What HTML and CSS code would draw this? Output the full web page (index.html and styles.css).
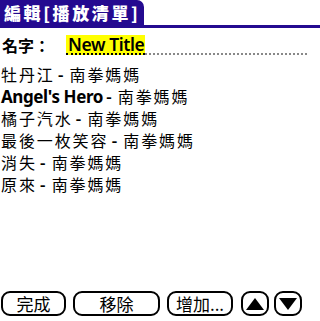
FILE: index.html
```html
<!DOCTYPE html>
<html lang="zh-Hant">
<head>
<meta charset="utf-8">
<link rel="stylesheet" href="styles.css">
</head>
<body>
<div class="screen">
  <div class="titlebar">
    <div class="tab">編輯[播放清單]</div>
  </div>
  <div class="name-row">
    <span class="label">名字：</span>
    <span class="field"><span class="value">New Title</span></span>
  </div>
  <ul class="list">
    <li>牡丹江<span class="sep">-</span>南拳媽媽</li>
    <li><span class="latin">Angel's Hero</span><span class="sep">-</span>南拳媽媽</li>
    <li>橘子汽水<span class="sep">-</span>南拳媽媽</li>
    <li>最後一枚笑容<span class="sep">-</span>南拳媽媽</li>
    <li>消失<span class="sep">-</span>南拳媽媽</li>
    <li>原來<span class="sep">-</span>南拳媽媽</li>
  </ul>
  <div class="buttons">
    <button class="btn w-done">完成</button>
    <button class="btn w-remove">移除</button>
    <button class="btn w-add">增加...</button>
    <button class="btn arrow"><svg width="20" height="14" viewBox="0 0 20 14"><polygon points="10,1 19,13 1,13" fill="#000"/></svg></button>
    <button class="btn arrow"><svg width="20" height="14" viewBox="0 0 20 14"><polygon points="1,1 19,1 10,13" fill="#000"/></svg></button>
  </div>
</div>
</body>
</html>
```

FILE: styles.css
```css
html, body {
  margin: 0;
  padding: 0;
  background: #fff;
}
body {
  font-family: "Noto Sans CJK TC", "Noto Sans", sans-serif;
  color: #000;
}
.screen {
  width: 320px;
  height: 321px;
  display: flex;
  flex-direction: column;
}
.titlebar {
  display: flex;
  border-bottom: 3px solid #240a90;
  height: 25px;
}
.tab {
  background: #240a90;
  color: #fff;
  font-weight: 900;
  font-size: 17px;
  line-height: 25px;
  letter-spacing: 2.6px;
  padding: 0 4px 0 4px;
  border-top-right-radius: 7px;
  white-space: nowrap;
}
.name-row {
  display: flex;
  align-items: center;
  margin-top: 7px;
  height: 19px;
}
.label {
  font-weight: 700;
  font-size: 16px;
  line-height: 18px;
  padding-left: 2px;
  width: 64px;
}
.field {
  flex: 0 0 241px;
  height: 18px;
  border-bottom: 2px dotted #888;
  display: flex;
}
.value {
  background: #ffff00;
  font-family: "Noto Sans", sans-serif;
  font-size: 17.5px;
  font-weight: 600;
  line-height: 18px;
  padding: 0 1px 0 2px;
  letter-spacing: -0.4px;
  border-bottom: 2px dotted #000;
  margin-bottom: -2px;
}
.list {
  list-style: none;
  margin: 9px 0 0 0;
  padding: 0 0 0 1px;
}
.list li {
  font-size: 16px;
  line-height: 22px;
  height: 22px;
  letter-spacing: 1.9px;
  white-space: nowrap;
}
.sep {
  display: inline-block;
  margin: 0 4px 0 3px;
  font-weight: 700;
}
.latin {
  font-family: "Noto Sans", sans-serif;
  font-weight: 700;
  font-size: 17px;
  letter-spacing: -0.4px;
}
.buttons {
  margin-top: auto;
  margin-bottom: 5px;
  display: flex;
  padding-left: 1px;
  gap: 7px;
}
.btn {
  font-family: "Noto Sans CJK TC", sans-serif;
  font-size: 17px;
  height: 25px;
  padding: 0;
  border: 2px solid #000;
  border-radius: 9px;
  background: #fff;
  color: #000;
  display: flex;
  align-items: center;
  justify-content: center;
  line-height: 1;
}
.w-done { width: 65px; }
.w-remove { width: 87px; }
.w-add { width: 66px; }
.arrow { width: 28px; margin-left: 1px; }
.arrow + .arrow { margin-left: -2px; }
```
